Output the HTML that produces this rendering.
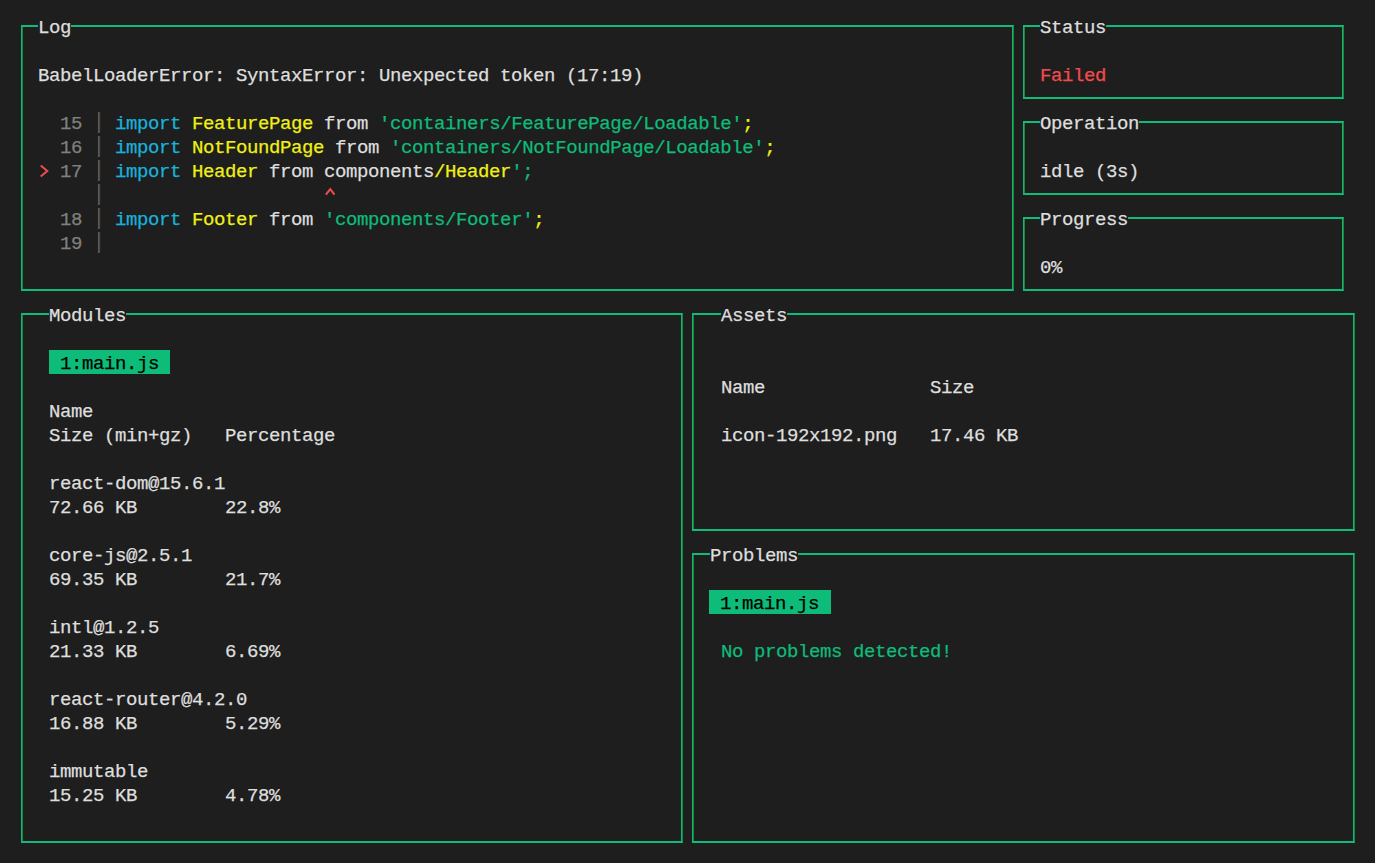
<!DOCTYPE html>
<html><head><meta charset="utf-8">
<style>
html,body{margin:0;padding:0}
body{width:1375px;height:863px;overflow:hidden;position:relative;background:#1e1e1e;font-family:"Liberation Mono",monospace;font-size:19px;letter-spacing:-0.4px;-webkit-text-stroke:0.25px currentColor;line-height:24px;color:#dedede}
.b{position:absolute;box-sizing:border-box;border-top:2px solid #0dbc79;border-bottom:2px solid #0dbc79;border-left:1px solid #17b86c;border-right:1px solid #138a34;box-shadow:inset 1px 0 0 #138a34,inset -1px 0 0 #17b86c,inset -2px 0 0 #201b2e,-1px 0 0 #201b2e}
.chev{display:inline-block;width:11px;height:24px;vertical-align:top;position:relative}
.bar{display:inline-block;width:11px;height:24px;vertical-align:top;position:relative}
.bar:after{content:"";position:absolute;left:4px;top:0px;width:4px;height:21px;background:linear-gradient(90deg,#1f1e2c 25%,#4e6060 25%,#4e6060 50%,#5e4430 50%,#5e4430 75%,#2c2420 75%)}
.t{position:absolute;white-space:pre;height:24px;padding-top:2px;box-sizing:border-box}
.h{background:#1e1e1e}
.tab{background:#0dbc79;color:#000}
.g{color:#808080}
.c{color:#18b2dc}
.y{color:#f0f014}
.s{color:#0dbc79}
.r{color:#f14c4c}
</style></head><body>
<!-- boxes -->
<div class="b" style="left:21px;top:25px;width:993px;height:266px"></div>
<div class="b" style="left:1023px;top:25px;width:321px;height:74px"></div>
<div class="b" style="left:1023px;top:121px;width:321px;height:74px"></div>
<div class="b" style="left:1023px;top:217px;width:321px;height:74px"></div>
<div class="b" style="left:21px;top:313px;width:662px;height:530px"></div>
<div class="b" style="left:692px;top:313px;width:663px;height:218px"></div>
<div class="b" style="left:692px;top:553px;width:663px;height:290px"></div>

<!-- titles -->
<div class="t h" style="left:38px;top:14px">Log</div>
<div class="t h" style="left:1040px;top:14px">Status</div>
<div class="t h" style="left:1040px;top:110px">Operation</div>
<div class="t h" style="left:1040px;top:206px">Progress</div>
<div class="t h" style="left:49px;top:302px">Modules</div>
<div class="t h" style="left:721px;top:302px">Assets</div>
<div class="t h" style="left:710px;top:542px">Problems</div>

<!-- log -->
<div class="t" style="left:38px;top:62px">BabelLoaderError: SyntaxError: Unexpected token (17:19)</div>
<div class="t" style="left:38px;top:110px"><span class="g">  15 </span><span class="bar"></span> <span class="c">import</span> <span class="y">FeaturePage</span> from <span class="s">'containers/FeaturePage/Loadable'</span><span class="y">;</span></div>
<div class="t" style="left:38px;top:134px"><span class="g">  16 </span><span class="bar"></span> <span class="c">import</span> <span class="y">NotFoundPage</span> from <span class="s">'containers/NotFoundPage/Loadable'</span><span class="y">;</span></div>
<div class="t" style="left:38px;top:158px"><span class="chev"><svg width="11" height="24" style="position:absolute;left:0;top:-2px"><polyline points="2.7,7.6 9.3,13 2.7,18.4" fill="none" stroke="#f14c4c" stroke-width="2"/></svg></span><span class="g"> 17 </span><span class="bar"></span> <span class="c">import</span> <span class="y">Header</span> from components<span class="y">/Header</span><span class="s">';</span></div>
<div class="t" style="left:38px;top:182px"><span class="g">     </span><span class="bar"></span>                    <span class="chev"><svg width="11" height="24" style="position:absolute;left:0;top:-2px"><polyline points="1.9,12.6 6.2,7.2 10.5,12.6" fill="none" stroke="#f14c4c" stroke-width="2.1"/></svg></span></div>
<div class="t" style="left:38px;top:206px"><span class="g">  18 </span><span class="bar"></span> <span class="c">import</span> <span class="y">Footer</span> from <span class="s">'components/Footer'</span><span class="y">;</span></div>
<div class="t" style="left:38px;top:230px"><span class="g">  19 </span><span class="bar"></span> </div>

<!-- status -->
<div class="t r" style="left:1040px;top:62px">Failed</div>
<div class="t" style="left:1040px;top:158px">idle (3s)</div>
<div class="t" style="left:1040px;top:254px">0%</div>

<!-- modules -->
<div class="t tab" style="left:49px;top:350px"> 1:main.js </div>
<div class="t" style="left:49px;top:398px">Name
Size (min+gz)   Percentage

react-dom@15.6.1
72.66 KB        22.8%

core-js@2.5.1
69.35 KB        21.7%

intl@1.2.5
21.33 KB        6.69%

react-router@4.2.0
16.88 KB        5.29%

immutable
15.25 KB        4.78%</div>

<!-- assets -->
<div class="t" style="left:721px;top:374px">Name               Size

icon-192x192.png   17.46 KB</div>

<!-- problems -->
<div class="t tab" style="left:709px;top:590px;width:122px"> 1:main.js </div>
<div class="t s" style="left:721px;top:638px">No problems detected!</div>
</body></html>
